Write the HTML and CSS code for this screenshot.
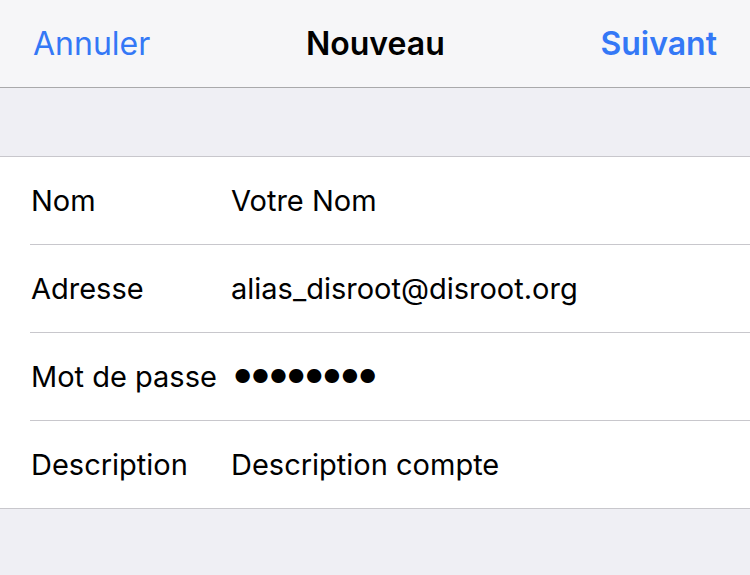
FILE: index.html
```html
<!DOCTYPE html>
<html lang="fr">
<head>
<meta charset="utf-8">
<title>Nouveau</title>
<link rel="stylesheet" href="styles.css">
</head>
<body>
<header class="navbar">
  <span class="nav-btn">Annuler</span>
  <span class="nav-title">Nouveau</span>
  <span class="nav-btn nav-strong">Suivant</span>
</header>
<div class="spacer"></div>
<section class="group">
  <div class="row"><span class="label">Nom</span><span class="value">Votre Nom</span></div>
  <div class="row"><span class="label">Adresse</span><span class="value">alias_disroot@disroot.org</span></div>
  <div class="row"><span class="label">Mot de passe</span><span class="value dots">●●●●●●●●</span></div>
  <div class="row"><span class="label">Description</span><span class="value">Description compte</span></div>
</section>
</body>
</html>
```
FILE: styles.css
```css
html, body {
  margin: 0;
  padding: 0;
  background: #efeff4;
  font-family: Inter, "Liberation Sans", sans-serif;
  color: #000;
}
.navbar {
  height: 87px;
  background: #f6f6f8;
  border-bottom: 1px solid #a9a9ab;
  display: flex;
  align-items: center;
  justify-content: space-between;
  padding: 0 33px 0 33px;
  box-sizing: content-box;
}
.nav-btn {
  color: #3478f6;
  font-size: 32px;
}
.nav-strong {
  font-weight: 600;
}
.nav-title {
  font-size: 32px;
  font-weight: 600;
}
.spacer {
  height: 68px;
}
.group {
  background: #fff;
  border-top: 1px solid #c8c7cc;
  border-bottom: 1px solid #c8c7cc;
  padding-left: 30px;
}
.row {
  height: 87px;
  display: flex;
  align-items: center;
  border-bottom: 1px solid #c8c7cc;
  font-size: 29px;
}
.row:last-child {
  border-bottom: none;
}
.label {
  width: 200px;
  padding-left: 1px;
}
.value {
  flex: 1;
}
.dots {
  font-size: 19px;
  letter-spacing: 0.5px;
  padding-left: 3px;
}
```
